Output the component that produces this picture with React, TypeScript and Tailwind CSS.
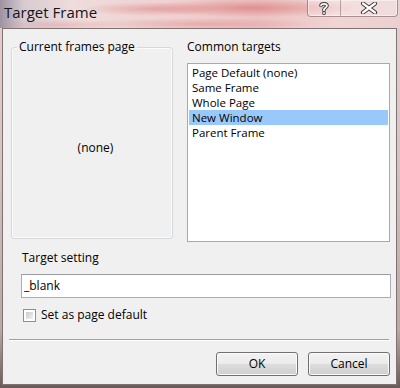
import React from "react";

const items = ["Page Default (none)", "Same Frame", "Whole Page", "New Window", "Parent Frame"];

function HelpIcon() {
  return (
    <svg width="14" height="14" viewBox="0 0 14 14">
      <path d="M4 4.5 C4 2.2 10 2.2 10 4.8 C10 6.6 7 6.8 7 8.6 V9.2" fill="none" stroke="#3a3a3a" strokeWidth="3.6" strokeLinecap="round" />
      <circle cx="7" cy="12" r="1.9" fill="#3a3a3a" />
      <path d="M4 4.5 C4 2.2 10 2.2 10 4.8 C10 6.6 7 6.8 7 8.6 V9.2" fill="none" stroke="#ffffff" strokeWidth="1.8" strokeLinecap="round" />
      <circle cx="7" cy="12" r="1" fill="#ffffff" />
    </svg>
  );
}

function CloseIcon() {
  return (
    <svg width="18" height="12" viewBox="0 0 18 12">
      <path d="M3 1.5 L15 10.5 M15 1.5 L3 10.5" stroke="#3a3a3a" strokeWidth="4.2" strokeLinecap="round" />
      <path d="M3 1.5 L15 10.5 M15 1.5 L3 10.5" stroke="#ffffff" strokeWidth="2.2" strokeLinecap="round" />
    </svg>
  );
}

export default function App() {
  return (
    <div className="relative w-[400px] h-[388px] overflow-hidden font-['Open_Sans','Noto_Sans',sans-serif] text-[12px] text-black bg-[linear-gradient(to_bottom,#e9cfcf_0%,#d9c2c2_40%,#b8a8a8_85%,#6a5a5a_100%)]">
      {/* Title bar */}
      <div className="h-[28px] pl-[4px] pt-[2px] text-[15px] leading-[20px] text-[#151515] bg-[radial-gradient(ellipse_110px_9px_at_250px_8px,rgba(210,80,80,0.45),transparent),radial-gradient(ellipse_70px_7px_at_150px_9px,rgba(210,90,90,0.35),transparent),radial-gradient(ellipse_120px_6px_at_200px_24px,rgba(215,110,110,0.35),transparent),radial-gradient(ellipse_60px_6px_at_60px_25px,rgba(215,120,120,0.3),transparent),linear-gradient(to_right,#9d92a2_0%,#d8cbd0_6%,#efdcdc_18%,#f0d0d0_45%,#ecc2c2_65%,#f1d4d4_85%,#ead0d0_100%)]">
        Target Frame
      </div>

      {/* Caption buttons */}
      <div className="absolute top-0 right-[2px] flex h-[17px] rounded-b-[4px] border border-t-0 border-[rgba(80,50,50,0.45)] bg-[rgba(255,255,255,0.25)] shadow-[inset_0_0_0_1px_rgba(255,255,255,0.45)]">
        <div className="w-[33px] flex items-center justify-center border-r border-[rgba(80,50,50,0.35)]">
          <HelpIcon />
        </div>
        <div className="w-[56px] flex items-center justify-center">
          <CloseIcon />
        </div>
      </div>

      {/* Client area */}
      <div className="ml-[2px] w-[395px] h-[357px] border border-[#7d7373] bg-[#f0f0f0] flex flex-col">
        {/* Top row */}
        <div className="flex items-start pt-[10px]">
          <div className="relative ml-[8px] mt-[8px] w-[162px] h-[192px] rounded-[3px] border border-[#d5d9dc] shadow-[inset_0_0_0_1px_#fbfbfb]">
            <span className="absolute -top-[9px] left-[5px] px-[2px] bg-[#f0f0f0] leading-[16px]">Current frames page</span>
            <div className="h-full flex items-center justify-center pl-[7px] pt-[9px]">(none)</div>
          </div>
          <div className="ml-[14px] w-[203px] flex flex-col">
            <div className="h-[16px] leading-[16px]">Common targets</div>
            <div className="mt-[8px] h-[179px] border border-[#a6a9ae] bg-white pt-[1px] text-[11.5px]">
              {items.map((it) => (
                <div
                  key={it}
                  className={
                    it === "New Window"
                      ? "h-[15px] leading-[15px] mx-[1px] px-[3px] bg-[#99c9fb]"
                      : "h-[15px] leading-[15px] mx-[1px] px-[3px]"
                  }
                >
                  {it}
                </div>
              ))}
            </div>
          </div>
        </div>

        {/* Target setting */}
        <div className="mt-[8px] ml-[19px] h-[16px] leading-[16px]">Target setting</div>
        <div className="mt-[8px] ml-[18px] w-[370px] h-[24px] border border-[#abadb3] border-t-[#9a9ca2] bg-white pl-[2px] leading-[22px]">
          _blank
        </div>

        {/* Checkbox */}
        <div className="mt-[9px] ml-[20px] h-[16px] flex items-center gap-[5px]">
          <div className="w-[13px] h-[13px] border border-[#8e8f8f] bg-white p-[2px]">
            <div className="w-full h-full bg-[linear-gradient(135deg,#c9ccd2,#eef0f2)]" />
          </div>
          <span className="leading-[16px]">Set as page default</span>
        </div>

        {/* Separator */}
        <div className="mt-[16px] ml-[6px] w-[380px] h-[2px] border-t border-[#a0a0a0] border-b-0 bg-white" />

        {/* Buttons */}
        <div className="mt-[11px] flex justify-end gap-[10px] pr-[6px]">
          <button className="w-[82px] h-[24px] rounded-[3px] border border-[#707070] bg-[linear-gradient(#f2f2f2_0%,#ebebeb_50%,#dddddd_51%,#cfcfcf_100%)] shadow-[inset_0_0_0_1px_#fbfbfb] leading-[22px]">
            OK
          </button>
          <button className="w-[82px] h-[24px] rounded-[3px] border border-[#707070] bg-[linear-gradient(#f2f2f2_0%,#ebebeb_50%,#dddddd_51%,#cfcfcf_100%)] shadow-[inset_0_0_0_1px_#fbfbfb] leading-[22px]">
            Cancel
          </button>
        </div>
      </div>
    </div>
  );
}
